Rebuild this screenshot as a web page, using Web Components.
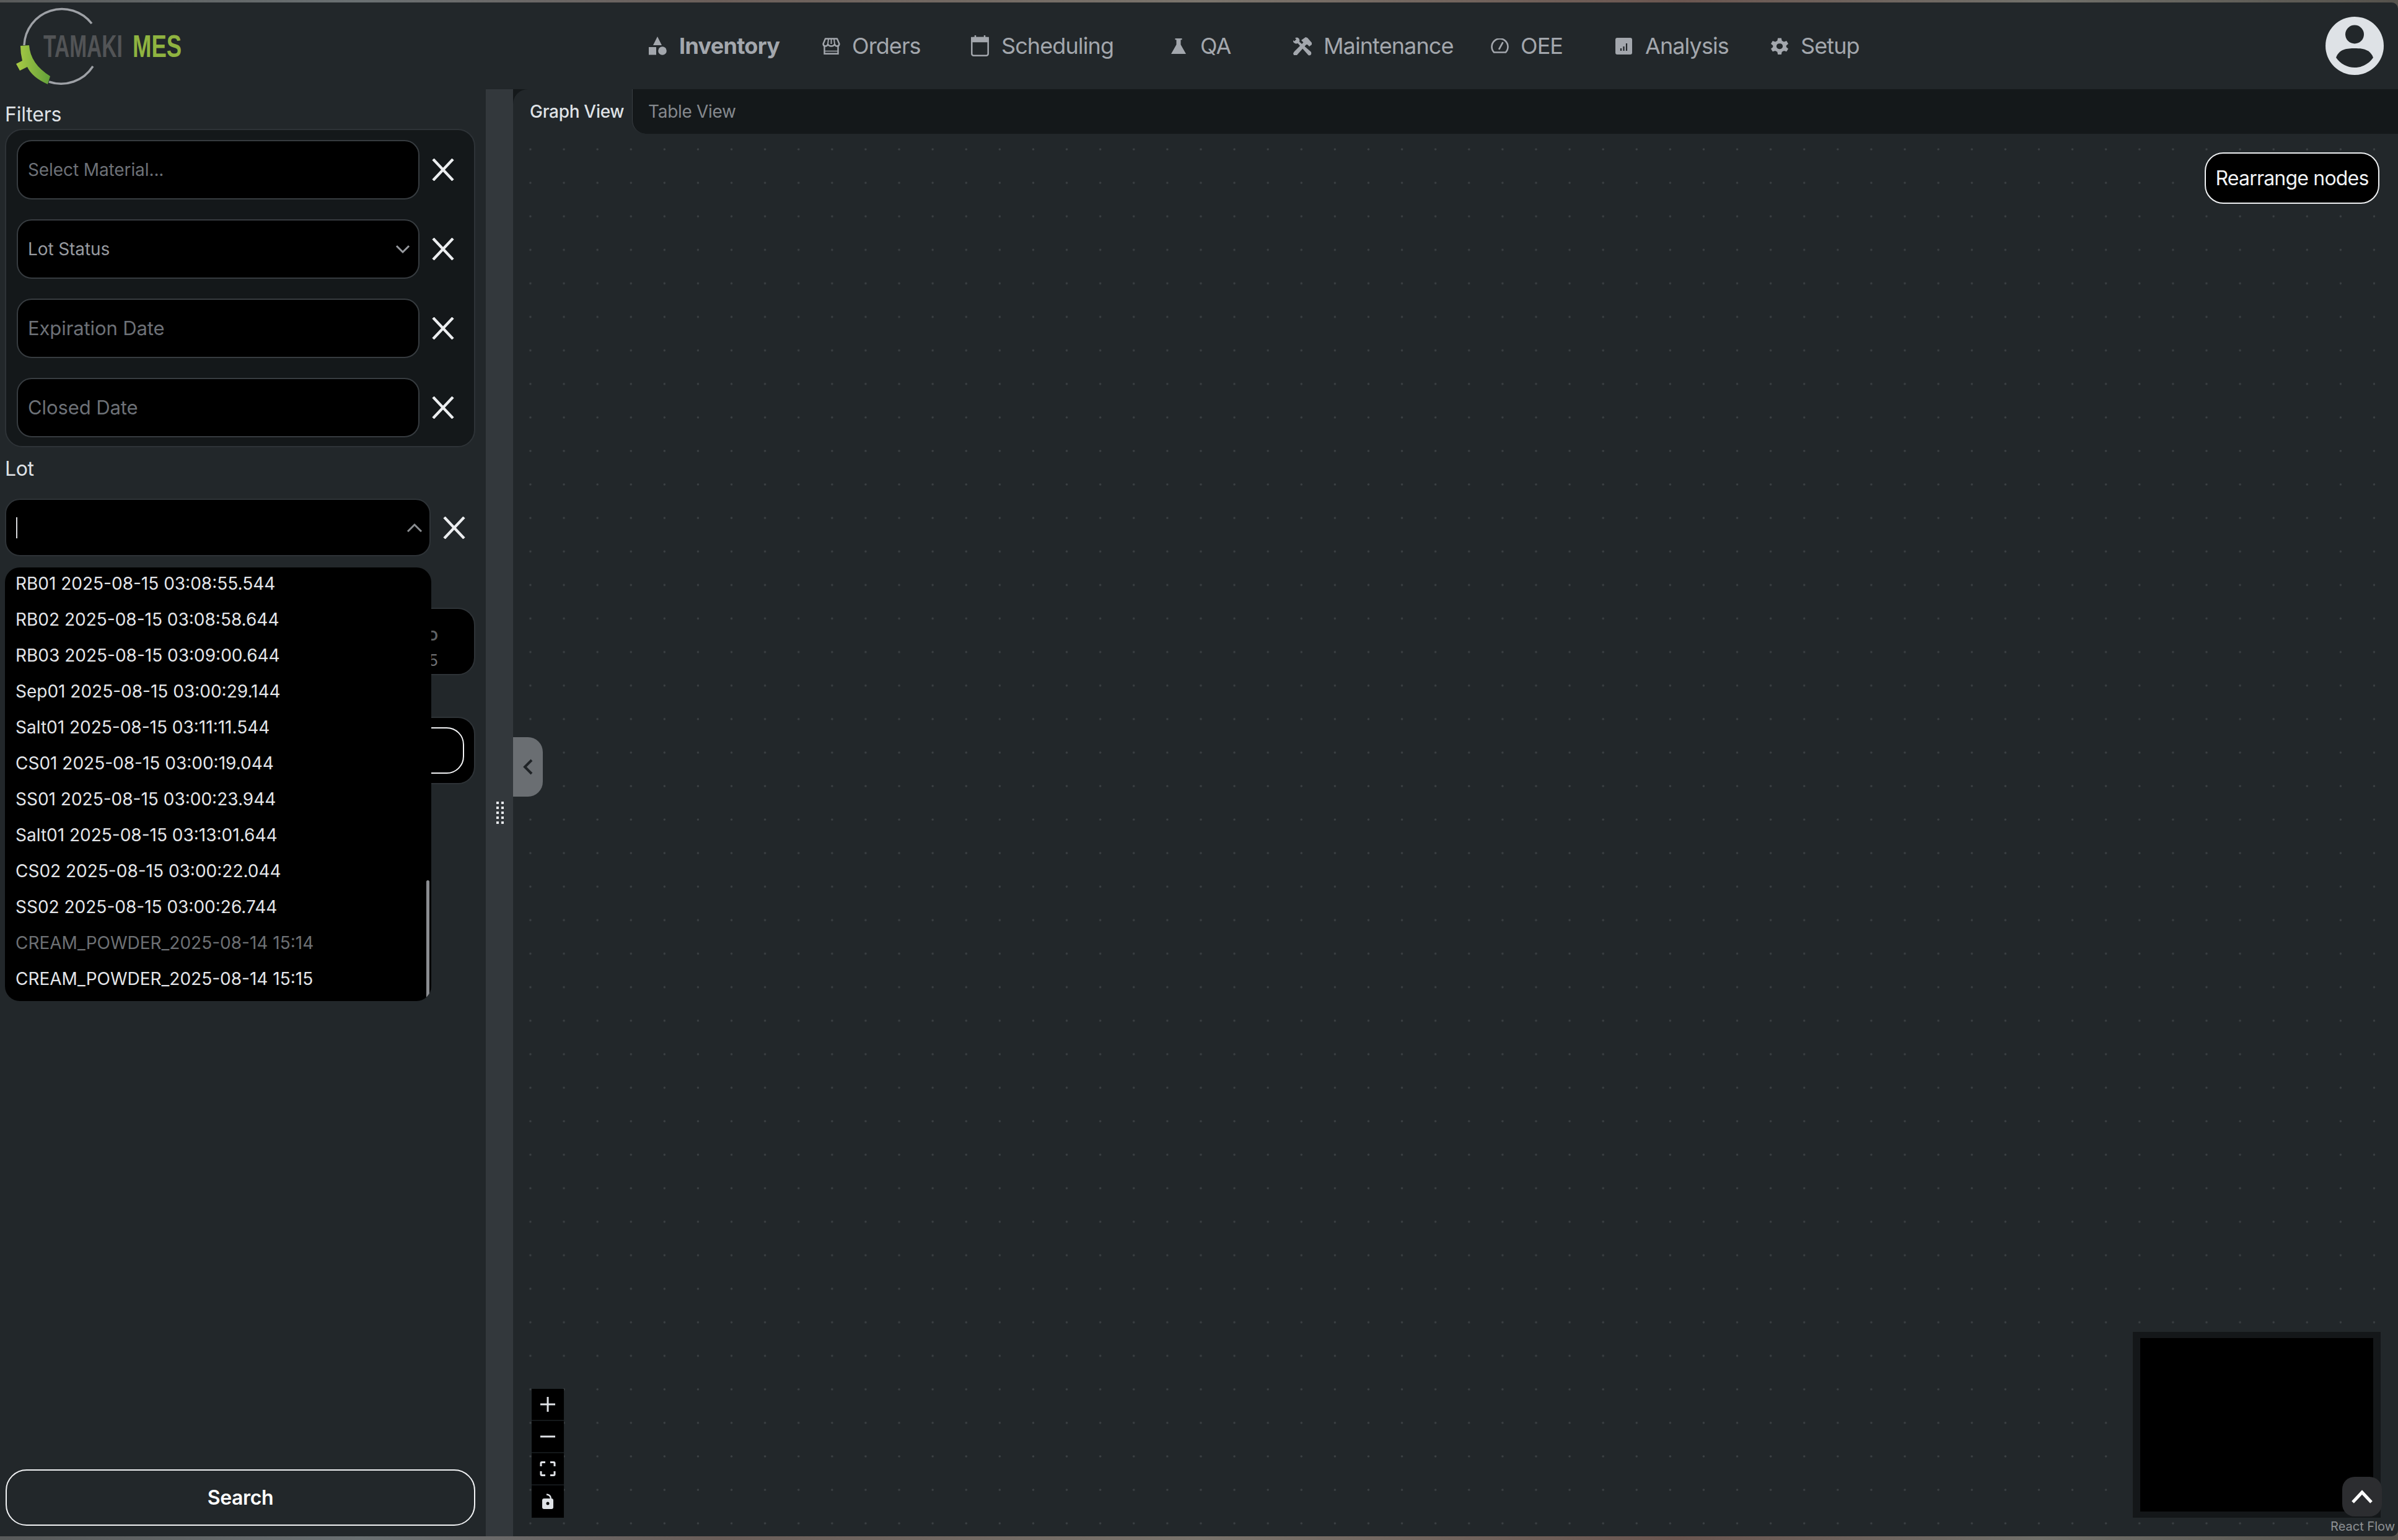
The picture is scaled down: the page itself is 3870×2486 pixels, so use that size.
<!DOCTYPE html>
<html><head><meta charset="utf-8">
<style>
html,body{margin:0;padding:0;background:#22272a;height:100%;overflow:hidden;font-family:Inter,"Liberation Sans",sans-serif}
</style></head><body>
<mes-app></mes-app>
<script>
const ICONS={
inv:'<svg viewBox="0 0 31 30" width="31" height="30" fill="currentColor"><path d="M15 0 22 14H8z"/><rect x="1" y="17" width="12" height="12.500"/><circle cx="23" cy="23" r="6.800"/></svg>',
ord:'<svg viewBox="0 0 29 27" width="29" height="27" fill="none" stroke="currentColor" stroke-width="2.400"><path d="M3.500 13V25.800H25.500V13"/><path d="M3.500 21.500H25.500" stroke-width="1.500"/><path d="M5 1.500H24L27.500 10Q27 13.500 24 13.500Q21 13.500 20 10.500Q18.500 13.500 14.500 13.500Q10.500 13.500 9 10.500Q8 13.500 5 13.500Q2 13.500 1.500 10Z" stroke-linejoin="round"/><path d="M10 2 9 10M14.500 2V10M19 2 20 10" stroke-width="2"/></svg>',
cal:'<svg viewBox="0 0 29 34" width="29" height="34" fill="none" stroke="currentColor" stroke-width="2.500"><rect x="1.300" y="4" width="26.400" height="28.700" rx="3"/><path d="M1.300 4H27.700V10H1.300Z" fill="currentColor"/><path d="M7 0V5M22 0V5"/></svg>',
qa:'<svg viewBox="0 0 24 25" width="24" height="25" fill="currentColor"><path d="M6.500 0H17.500V2.200H15.500V10L24 25H0L8.500 10V2.200H6.500Z"/></svg>',
mnt:'<svg viewBox="0 0 31 31" width="31" height="31" fill="currentColor"><path d="M3 24 18 9 22 13 7 30 2 30 1 27Z"/><path d="M14 6 21 1 24 2 31 10 31 13 27 16 24 13 20 13 17 9Z"/><path d="M1 6 3 7.500 6 4.500 4 2.500Q8 0 10.500 3.500Q12 6 11 8.500L30 25Q31 28 29 30Q26 31 25 29.500L8.500 11Q5 12 3 10.500Q.5 9 1 6Z"/></svg>',
oee:'<svg viewBox="0 0 29 24" width="29" height="24" fill="none" stroke="currentColor" stroke-width="2.600"><path d="M5.100 22.500H23.900A13 13 0 1 0 5.100 22.500Z" stroke-linejoin="round"/><path d="M13.500 17 19 7" stroke-linecap="round"/></svg>',
ana:'<svg viewBox="0 0 27 27" width="27" height="27"><rect width="27" height="27" rx="3" fill="currentColor"/><path d="M9 21V17M13.500 21V14M18 21V9" stroke="#22272a" stroke-width="2.200"/></svg>',
set:'<svg viewBox="0 0 30 30" width="28" height="29"><path fill="currentColor" fill-rule="evenodd" d="M12 1H18L19 5.500 22.500 7.500 27 6 30 11 26.500 14V16.500L30 19.500 27 24.500 22.500 23 19 25 18 29.500H12L11 25 7.500 23 3 24.500 0 19.500 3.500 16.500V14L0 11 3 6 7.500 7.500 11 5.500ZM15 10.500A4.800 4.800 0 1 0 15 20 4.800 4.800 0 1 0 15 10.500Z"/></svg>'};
class E extends HTMLElement{
 constructor(){super();this.attachShadow({mode:'open'}).innerHTML=this.tpl()}
 tpl(){return ''}
}
const X='<svg viewBox="0 0 36 36" width="36" height="36" fill="none" stroke="#eceef0" stroke-width="4.400"><path d="M2 1 34 35M34 1 2 35"/></svg>';
customElements.define('mes-logo',class extends E{tpl(){return `<style>:host{display:block;width:300px;height:140px;position:relative;flex:none}
svg{position:absolute;left:0;top:0}
.t{position:absolute;left:70px;top:45.700px;font:700 50px/50px "Liberation Sans",sans-serif;color:#525456;transform-origin:0 0;transform:scaleX(.67);white-space:nowrap}
.m{left:214px;color:#8fb340;transform:scaleX(.73)}</style>
<svg width="300" height="140" viewBox="0 4 300 140"><defs><linearGradient id="g"><stop offset="0" stop-color="#a9cb45"/><stop offset="1" stop-color="#63a03a"/></linearGradient></defs>
<path d="M148 38A61 61 0 0 0 39 73" fill="none" stroke="#9ea1a6" stroke-width="3.500"/>
<path d="M150 107A61 61 0 0 1 79 132" fill="none" stroke="#9ea1a6" stroke-width="3.500"/>
<path d="M33 74 47 73Q49 103 81 123L77 136Q52 125 44 108L32 114 26 103 36 98Q33 86 33 74Z" fill="url(#g)"/></svg>
<div class="t">TAMAKI</div><div class="t m">MES</div>`}});
customElements.define('nav-item',class extends E{tpl(){return `<style>:host{display:flex;align-items:center;gap:var(--g,19px);width:var(--w);font:400 36px/44px Inter,sans-serif;letter-spacing:-.9px;color:#a3a7ad;white-space:nowrap}
:host([active]){font-weight:700;letter-spacing:-.7px}
.i{display:flex;align-items:center;justify-content:center}</style><span class="i">${ICONS[this.getAttribute('icon')]}</span><slot></slot>`}});
customElements.define('mes-header',class extends E{tpl(){return `<style>:host{display:flex;align-items:center;height:140px;background:#22272a;flex:none;position:relative}
.nav{display:flex;margin-left:746px;align-items:center}
.av{margin-left:auto;margin-right:23px;margin-top:-1px;width:94px;height:94px}</style>
<mes-logo></mes-logo>
<div class="nav">
<nav-item icon="inv" active style="--w:281px">Inventory</nav-item>
<nav-item icon="ord" style="--w:240px">Orders</nav-item>
<nav-item icon="cal" style="--w:323px;--g:20px">Scheduling</nav-item>
<nav-item icon="qa" style="--w:196px;--g:23px">QA</nav-item>
<nav-item icon="mnt" style="--w:320px">Maintenance</nav-item>
<nav-item icon="oee" style="--w:201px">OEE</nav-item>
<nav-item icon="ana" style="--w:251px;--g:21px">Analysis</nav-item>
<nav-item icon="set" style="--g:20px">Setup</nav-item></div>
<svg class="av" viewBox="0 0 94 94"><circle cx="47" cy="47" r="47" fill="#dee2e6"/><circle cx="47" cy="28.500" r="15" fill="#22272a"/><path d="M17 66C22 52 35 51 47 51C59 51 72 52 77 66C70 76 59 82 47 82C35 82 24 76 17 66Z" fill="#22272a"/></svg>`}});
customElements.define('filter-row',class extends E{tpl(){const t=this.getAttribute('kind');return `<style>:host{display:flex;align-items:center;gap:20px;height:96px}
.f{box-sizing:border-box;width:650px;height:96px;background:#000;border:2.500px solid #373c40;border-radius:24px;display:flex;align-items:center;justify-content:space-between;padding:0 13px 0 16px;font:400 var(--fs,31px)/36px Inter,sans-serif;letter-spacing:var(--ls,-.1px);color:var(--c,#6d7177)}
svg.x{flex:none}</style>
<div class="f"><span><slot></slot></span>${t=='sel'?'<svg width="24" height="24" viewBox="0 0 24 24" fill="none" stroke="#989ba0" stroke-width="3"><path d="M2 7 12 17 22 7"/></svg>':''}</div>${X}`}});
customElements.define('lot-dropdown',class extends E{tpl(){return `<style>:host{display:block;position:absolute;left:8px;top:772px;width:688px;height:700px;background:#000;border-radius:24px;z-index:5;overflow:hidden;font:400 28px/58px Inter,sans-serif;color:#e4e6ea}
.l{margin-top:-3px}::slotted(div){padding-left:17px;height:58px;white-space:nowrap}
.s{position:absolute;right:3px;top:505px;width:5px;height:190px;background:#8a8c90;border-radius:3px}</style><div class="l"><slot></slot></div><div class="s"></div>`}});
customElements.define('side-bar',class extends E{tpl(){return `<style>:host{display:flex;flex-direction:column;width:784px;flex:none;position:relative;background:#22272a;box-sizing:border-box;padding:0 17px 17px 8px;color:#dfe2e6;font:400 32px/40px Inter,sans-serif}
.lb{height:40px;margin:21px 0 0 0;letter-spacing:-.2px}
.panel{box-sizing:border-box;margin-top:3px;height:514px;background:#14181a;border:2.500px solid #2e3337;border-radius:28px;padding:15.500px 0 0 17px;display:flex;flex-direction:column;gap:32px}
.lotlb{height:40px;margin:15px 0 0 0;letter-spacing:-.4px}
.lot{display:flex;align-items:center;gap:20px;margin-top:28px;height:93px}
.in{box-sizing:border-box;width:687px;height:93px;background:#000;border:2.500px solid #2e3337;border-radius:24px;display:flex;align-items:center;justify-content:space-between;padding:0 11px 0 16px}
.caret{width:2px;height:34px;background:#d8dadd}
.c1{box-sizing:border-box;margin-top:83px;height:109px;background:#000;border:2.500px solid #2e3337;border-radius:28px;display:flex;flex-direction:column;align-items:flex-end;justify-content:center;padding:20px 58px 0 0;font:700 22px/39px Inter,sans-serif;color:#5f6266}
.c1 span+span{font:400 26px/39px Inter,sans-serif;color:#6d7074}
.c2{box-sizing:border-box;margin-top:67px;height:109px;background:#000;border:2.500px solid #2e3337;border-radius:28px;padding:15px 16px}
.c2 i{display:block;height:75px;border:2.500px solid #f2f3f5;border-radius:28px;box-sizing:border-box}
.sp{flex:1}
.go{box-sizing:border-box;height:91px;border:2.500px solid #f2f3f5;border-radius:34px;background:transparent;color:#fff;font:600 32px/88px Inter,sans-serif;letter-spacing:-.4px;text-align:center;margin:0 0 0 1px}
</style>
<div class="lb">Filters</div>
<div class="panel">
<filter-row style="--fs:28px;--ls:-.1px">Select Material...</filter-row>
<filter-row kind="sel" style="--fs:28px;--ls:-.1px;--c:#989ba0">Lot Status</filter-row>
<filter-row>Expiration Date</filter-row>
<filter-row>Closed Date</filter-row></div>
<div class="lotlb">Lot</div>
<div class="lot"><div class="in"><span class="caret"></span><svg width="26" height="18" viewBox="0 0 26 18" fill="none" stroke="#8b8e92" stroke-width="3"><path d="M2 15 13 4 24 15"/></svg></div>${X}</div>
<div class="c1"><span>D</span><span>5</span></div>
<div class="c2"><i></i></div>
<div class="sp"></div>
<div class="go">Search</div>
<slot></slot>`}});
customElements.define('flow-controls',class extends E{tpl(){return `<style>:host{position:absolute;left:30px;bottom:30px;display:flex;flex-direction:column;gap:2px;width:52px;background:#14181a}
div{height:50px;background:#000;display:flex;align-items:center;justify-content:center}div:last-child{height:52px}</style>
<div><svg width="26" height="26" viewBox="0 0 26 26" stroke="#dfe2e6" stroke-width="3"><path d="M13 1V25M1 13H25"/></svg></div>
<div><svg width="26" height="26" viewBox="0 0 26 26" stroke="#dfe2e6" stroke-width="3"><path d="M1 13H25"/></svg></div>
<div><svg width="26" height="24" viewBox="0 0 26 24" fill="none" stroke="#dfe2e6" stroke-width="3"><path d="M2 8V3Q2 1.500 3.500 1.500H9M17 1.500H22.500Q24 1.500 24 3V8M24 16V21Q24 22.500 22.500 22.500H17M9 22.500H3.500Q2 22.500 2 21V16"/></svg></div>
<div><svg width="20" height="26" viewBox="0 0 20 26"><path d="M8 1.500Q15 2 15 9" fill="none" stroke="#dfe2e6" stroke-width="2.400"/><rect x="1" y="8" width="18" height="17" rx="3" fill="#dfe2e6"/><circle cx="10" cy="16" r="2.500" fill="#000"/></svg></div>`}});
customElements.define('flow-minimap',class extends E{tpl(){return `<style>:host{position:absolute;right:28px;bottom:30px;width:400px;height:300px;box-sizing:border-box;background:#141719;padding:10px 12px}
.in{height:280px;background:#000}
.b{position:absolute;right:-2px;bottom:2px;width:64px;height:64px;border-radius:20px;background:#2c2d30;display:flex;align-items:center;justify-content:center}</style>
<div class="in"></div><div class="b"><svg width="34" height="24" viewBox="0 0 34 24" fill="none" stroke="#fff" stroke-width="5"><path d="M2 21 17 5 32 21"/></svg></div>`}});
customElements.define('tab-bar',class extends E{tpl(){return `<style>:host{display:flex;height:72px;background:#14181a;flex:none;font:500 28px/36px Inter,sans-serif;letter-spacing:-.3px;align-items:center;position:relative}
.a{box-sizing:border-box;width:192px;height:72px;background:#22272a;border-radius:24px 0 0 0;padding:0 0 0 27px;display:flex;align-items:center;color:#dfe2e6;position:relative}
.n{margin-left:26px;color:#85898e;font-weight:400;position:relative}
.sq{position:absolute;left:192px;top:0;width:24px;height:72px;background:#22272a}
.r{position:absolute;left:192px;top:0;width:24px;height:72px;background:#14181a;border-left:1.500px solid #3a3f43;border-bottom-left-radius:22px;box-sizing:border-box}</style>
<div class="a"><slot name="a"></slot></div><div class="sq"></div><div class="r"></div><div class="n"><slot name="b"></slot></div>`}});
customElements.define('flow-canvas',class extends E{tpl(){return `<style>:host{display:block;flex:1;position:relative;overflow:hidden;background:#22272a}
svg.bg{position:absolute;inset:0;width:100%;height:100%}
.btn{position:absolute;right:30px;top:30px;box-sizing:border-box;width:282px;height:83px;background:#000;border:2.500px solid #eef0f2;border-radius:30px;color:#f1f3f5;font:400 32px/80px Inter,sans-serif;letter-spacing:-.8px;text-align:center;white-space:nowrap}
.rf{position:absolute;right:5px;bottom:4px;font:400 20px/24px Inter,sans-serif;color:#8e9194}</style>
<svg class="bg"><defs><pattern id="d" x="1.950" y="-1.500" width="54.100" height="54.100" patternUnits="userSpaceOnUse"><circle cx="26" cy="26.500" r="1.700" fill="#3c4144"/></pattern></defs><rect width="100%" height="100%" fill="url(#d)"/></svg>
<div class="btn">Rearrange nodes</div>
<flow-controls></flow-controls><flow-minimap></flow-minimap>
<div class="rf">React Flow</div>`}});
customElements.define('mes-app',class extends E{tpl(){return `<style>:host{display:flex;flex-direction:column;width:3870px;height:2486px;box-sizing:border-box;padding:4px 0 6px;background:linear-gradient(90deg,#585a5a,#6a7072 15%,#6b5e59 30%,#7a746c 50%,#6b5650 70%,#71706a 85%,#55524c);overflow:hidden;position:relative}
.w{display:flex;flex-direction:column;flex:1;min-height:0;border-radius:0 10px 10px 0;overflow:hidden}
.m{display:flex;flex:1;min-height:0}
.sp{width:44px;flex:none;background:#33383c;position:relative}
.grip{position:absolute;left:17px;top:1150px;display:grid;grid-template-columns:4px 4px;gap:4px}
.grip i{width:4px;height:4px;background:#e6e8eb}
.col{position:absolute;left:44px;top:1046px;width:48px;height:96px;background:#6a6e72;border-radius:0 24px 24px 0;display:flex;align-items:center;justify-content:center;z-index:3}
.r{flex:1;display:flex;flex-direction:column;min-width:0}</style>
<div class="w"><mes-header></mes-header>
<div class="m"><side-bar><lot-dropdown>
<div>RB01 2025-08-15 03:08:55.544</div><div>RB02 2025-08-15 03:08:58.644</div><div>RB03 2025-08-15 03:09:00.644</div><div>Sep01 2025-08-15 03:00:29.144</div><div>Salt01 2025-08-15 03:11:11.544</div><div>CS01 2025-08-15 03:00:19.044</div><div>SS01 2025-08-15 03:00:23.944</div><div>Salt01 2025-08-15 03:13:01.644</div><div>CS02 2025-08-15 03:00:22.044</div><div>SS02 2025-08-15 03:00:26.744</div><div style="color:#6d7074">CREAM_POWDER_2025-08-14 15:14</div><div>CREAM_POWDER_2025-08-14 15:15</div>
</lot-dropdown></side-bar>
<div class="sp"><div class="grip">${'<i></i>'.repeat(10)}</div><div class="col"><svg width="18" height="26" viewBox="0 0 18 26" fill="none" stroke="#1f2326" stroke-width="4"><path d="M15 2 4 13 15 24"/></svg></div></div>
<div class="r"><tab-bar><span slot="a">Graph View</span><span slot="b">Table View</span></tab-bar><flow-canvas></flow-canvas></div></div></div>`}});
</script></body></html>
